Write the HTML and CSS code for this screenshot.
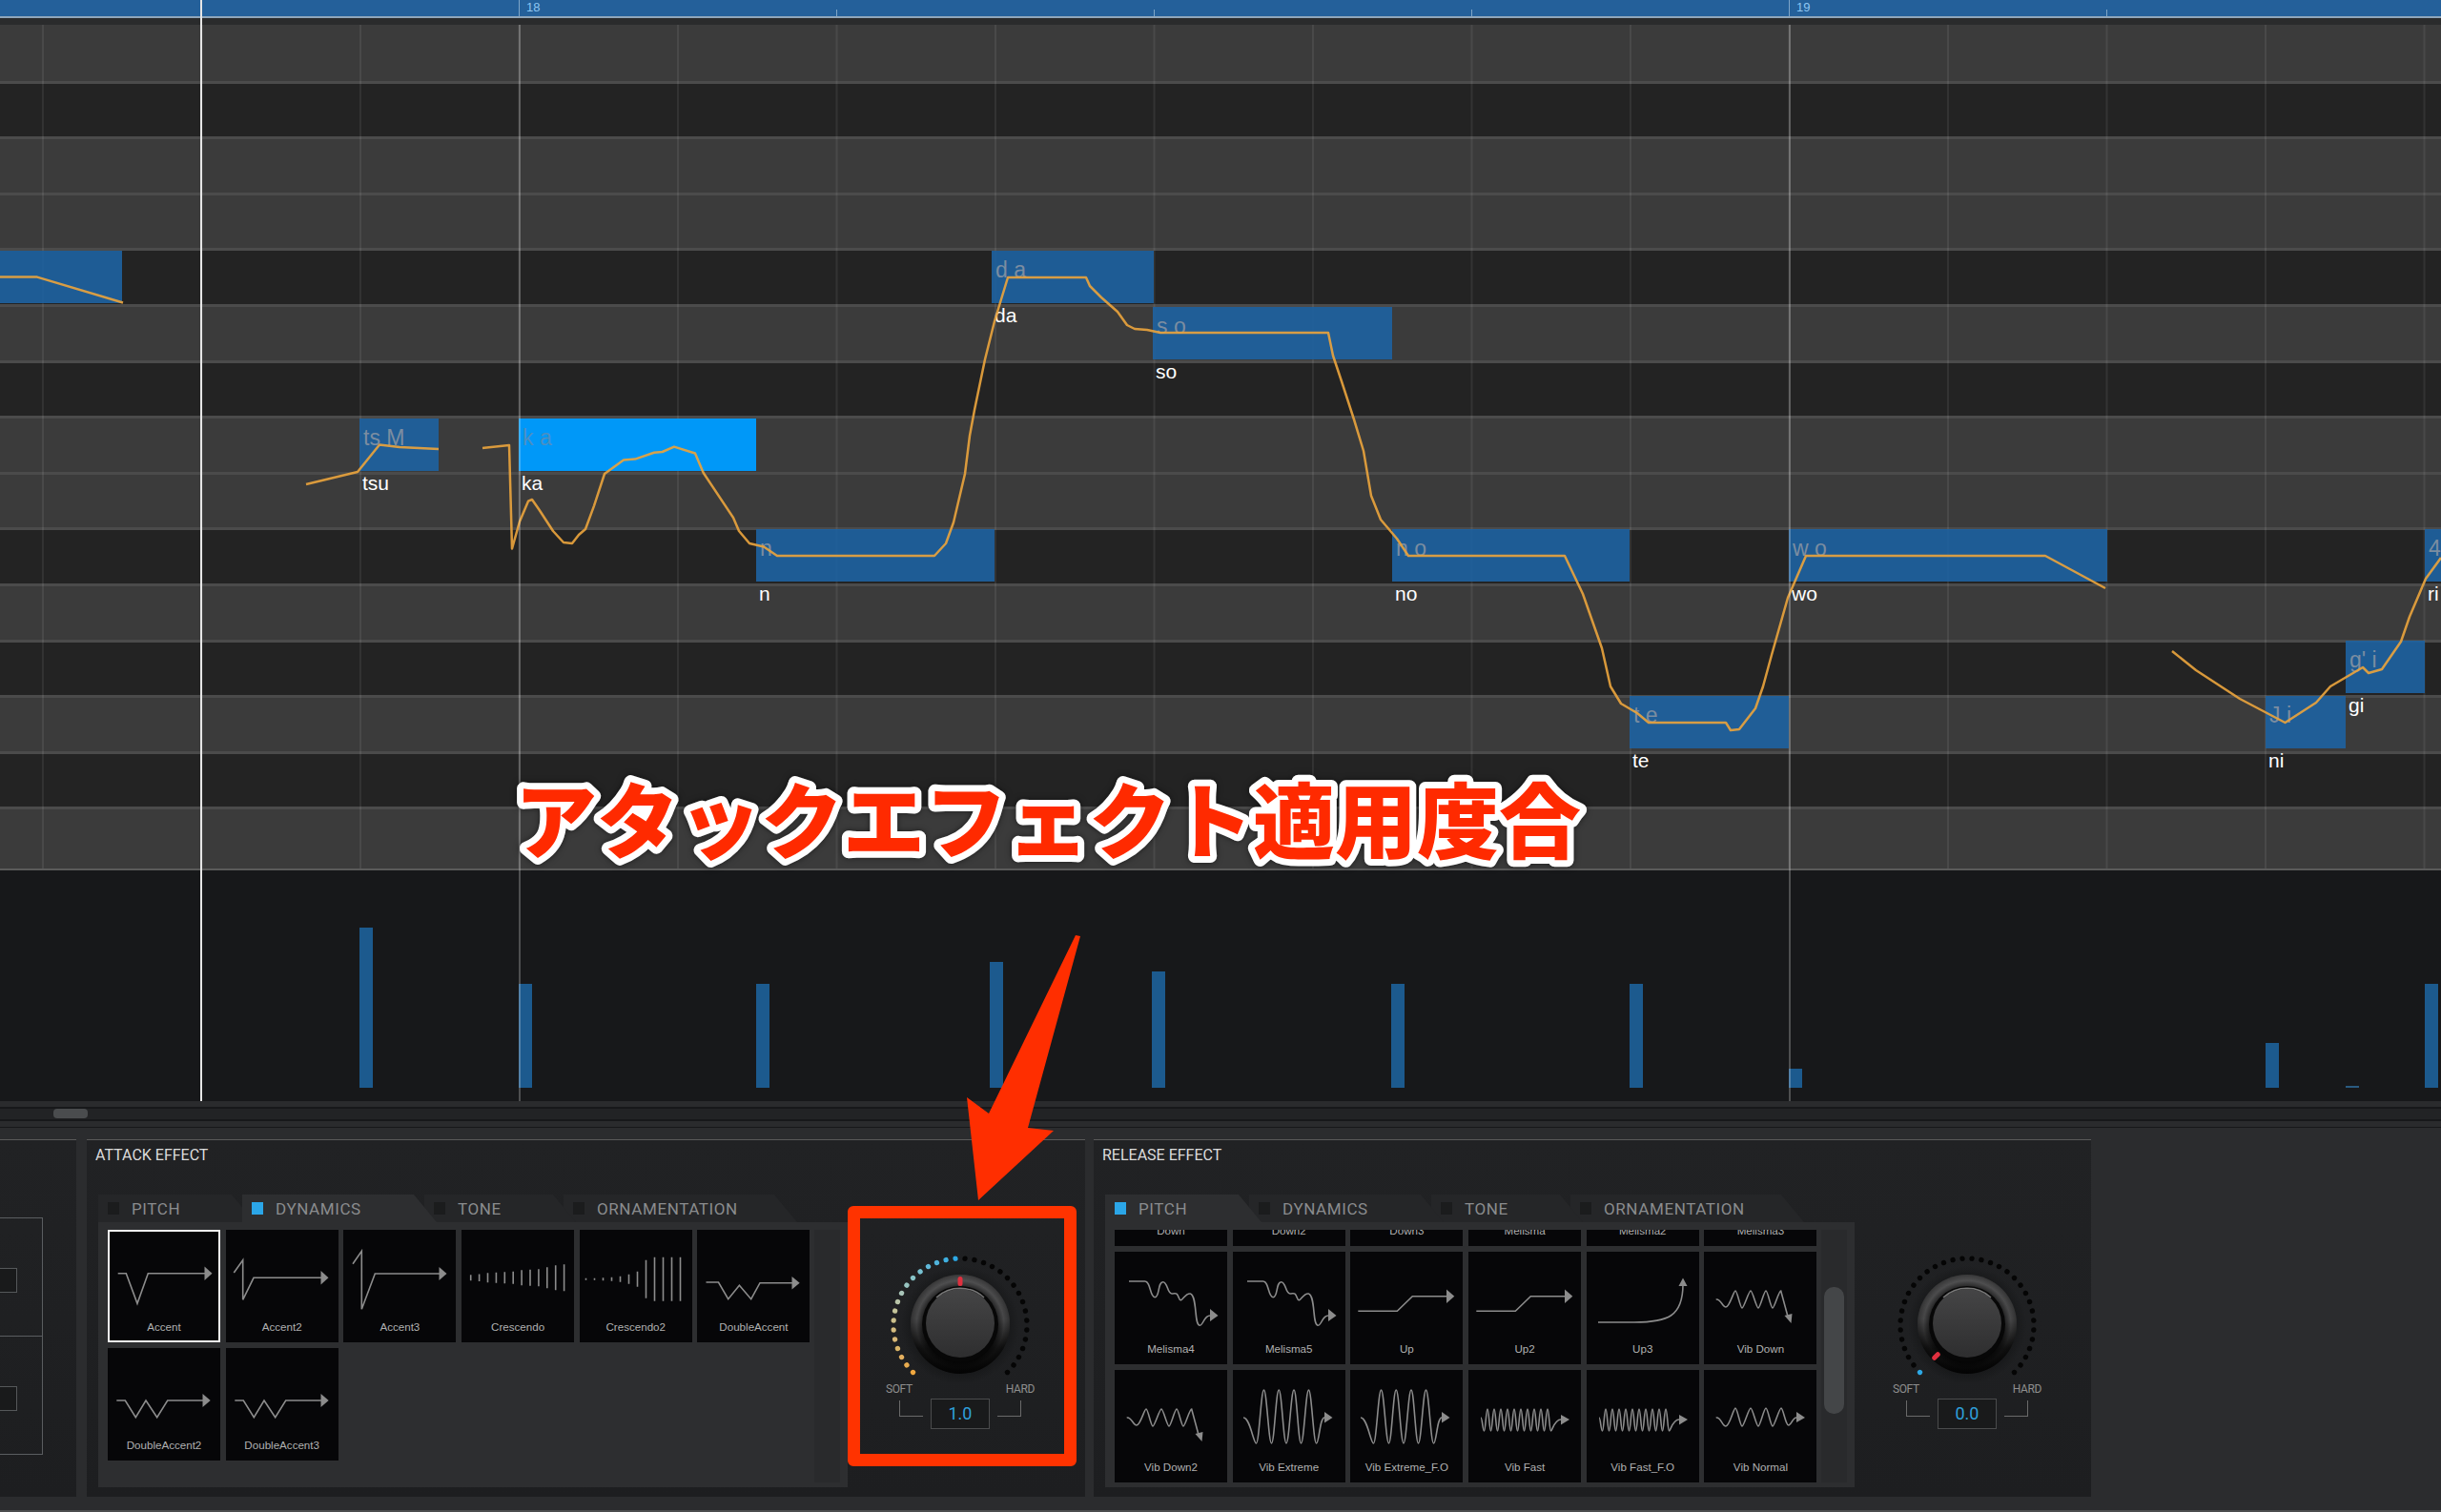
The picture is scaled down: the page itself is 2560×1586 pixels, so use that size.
FILE: index.html
```html
<!DOCTYPE html>
<html lang="ja">
    <head>
        <meta charset="UTF-8">
        <title>Attack Effect</title>
        <link rel="stylesheet" href="styles.css">
    </head>
    <body>
        <div class="timeline">
            <div class="ruler">
                <div class="tick"></div>
                <div class="tick tick-bar">18</div>
                <div class="tick"></div>
                <div class="tick"></div>
                <div class="tick"></div>
                <div class="tick tick-bar">19</div>
                <div class="tick"></div>
            </div>
            <div class="roll">
                <div class="row"></div>
                <div class="row dark"></div>
                <div class="row"></div>
                <div class="row"></div>
                <div class="row dark"></div>
                <div class="row"></div>
                <div class="row dark"></div>
                <div class="row"></div>
                <div class="row"></div>
                <div class="row dark"></div>
                <div class="row"></div>
                <div class="row dark"></div>
                <div class="row"></div>
                <div class="row dark"></div>
                <div class="row"></div>
            </div>
            <div class="velocity">
                <div class="vel" style="left:377px;height:168px"></div>
                <div class="vel" style="left:544px;height:109px"></div>
                <div class="vel" style="left:793px;height:109px"></div>
                <div class="vel" style="left:1038px;height:132px"></div>
                <div class="vel" style="left:1208px;height:122px"></div>
                <div class="vel" style="left:1459px;height:109px"></div>
                <div class="vel" style="left:1709px;height:109px"></div>
                <div class="vel" style="left:1876px;height:20px"></div>
                <div class="vel" style="left:2376px;height:47px"></div>
                <div class="vel vel-dim" style="left:2460px;height:2px"></div>
                <div class="vel" style="left:2543px;height:109px"></div>
            </div>

            <!-- notes sit on the roll at their pitch and time -->
            <div class="note" style="left:0;top:263px;width:128px"></div>
            <div class="note" style="left:377px;top:439px;width:83px">ts M<b>tsu</b></div>
            <div class="note note-on" style="left:544px;top:439px;width:249px">k a<b>ka</b></div>
            <div class="note" style="left:793px;top:555px;width:250px">n<b>n</b></div>
            <div class="note" style="left:1040px;top:263px;width:170px">d a<b>da</b></div>
            <div class="note" style="left:1209px;top:322px;width:251px">s o<b>so</b></div>
            <div class="note" style="left:1460px;top:555px;width:249px">n o<b>no</b></div>
            <div class="note" style="left:1709px;top:730px;width:167px">t e<b>te</b></div>
            <div class="note" style="left:1876px;top:555px;width:334px">w o<b>wo</b></div>
            <div class="note" style="left:2376px;top:730px;width:84px">J i<b>ni</b></div>
            <div class="note" style="left:2460px;top:672px;width:83px">g' i<b>gi</b></div>
            <div class="note" style="left:2543px;top:555px;width:17px">4<b>ri</b></div>

            <svg class="curve" width="2560" height="1155" viewBox="0 0 2560 1155">
                <polyline points="0,290.6 39,290.6 129,317.5"/>
                <polyline points="321,508 375,495 398,466.5 419,469 460,471"/>
                <polyline points="506,470 534,467 537,575.5 545,547 554,525.7 558,524 565.5,534.7 580,557 591,569 600,570 607,561 614,555 623,530.6 634,497 654,482.4 666,481.6 686,474.7 694.6,474 707,468.6 729,475.5 737.7,496 769,543 775,557 786,570 801,573.5 815,583 980,583 992,570 1000,548 1012,497 1017,457 1022,430 1033,377 1043,337 1057,291 1139,291 1143,300 1155,312 1172,327 1182,341 1190,345 1203,346 1217,349 1393,349 1398,373 1407,400 1420,440 1430,473 1438,520 1448,545 1465,565 1477,583 1641,583 1660,623 1680,680 1689,720 1700,738 1717,748 1729,758 1810,758 1815,766 1824,765 1841,743 1849,720 1858,687 1875,627 1894,583 2145,583 2208,617"/>
                <polyline points="2278,683 2303,703 2349,733 2396.5,758 2429,737 2444,720 2478,700 2484,706 2498,702 2518,673 2527,647 2544,607 2560,585"/>
            </svg>

            <div class="bar-line bar-18"></div>
            <div class="bar-line bar-19"></div>
            <div class="playhead"></div>
        </div>

        <div class="scroller"><div class="thumb"></div></div>

        <div class="panels">
            <div class="panel side">
                <div class="side-box">
                    <div class="side-cell"><div class="side-square"></div></div>
                    <div class="side-cell"><div class="side-square"></div></div>
                </div>
            </div>

            <div class="panel fx">
                <div class="panel-title">ATTACK EFFECT</div>
                <div class="fx-body">
                    <div class="fx-left">
                        <div class="tabs">
                            <div class="tab tab-pitch"><i></i>PITCH</div>
                            <div class="tab tab-dyn active"><i></i>DYNAMICS</div>
                            <div class="tab tab-tone"><i></i>TONE</div>
                            <div class="tab tab-orn"><i></i>ORNAMENTATION</div>
                        </div>
                        <div class="tile-box">
                            <div class="tile-view">
                                <div class="tile-grid">
                                    <div class="tile selected">
                                        <svg class="art" viewBox="0 0 118 90"><path d="M10.7 45.7H19.3L31 77.3 42.3 45.7H102"/><polygon points="101.5,38.5 109.5,45.7 101.5,53"/></svg>
                                        <span>Accent</span>
                                    </div>
                                    <div class="tile">
                                        <svg class="art" viewBox="0 0 118 90"><path d="M8.3 45L17.7 31.7V73.3L29 50.3H100"/><polygon points="99.5,43 107.5,50.3 99.5,57.5"/></svg>
                                        <span>Accent2</span>
                                    </div>
                                    <div class="tile">
                                        <svg class="art" viewBox="0 0 118 90"><path d="M10 35.7L19.3 22.3V83.3L33.3 46H101"/><polygon points="100.5,39 108.5,46 100.5,53"/></svg>
                                        <span>Accent3</span>
                                    </div>
                                    <div class="tile">
                                        <svg class="art" viewBox="0 0 118 90"><path d="M9.7 47.3v6M18.6 46.6v7.4M27.5 45.3v10M36.4 44.8v11M45.3 44.3v12M54.2 43.8v13M63.1 42.3v16M72 41.8v17M80.9 41.3v18M89.8 39.3v22M98.7 37.3v26M107.6 36.3v28"/></svg>
                                        <span>Crescendo</span>
                                    </div>
                                    <div class="tile">
                                        <svg class="art" viewBox="0 0 118 90"><path d="M6.5 50.7v2M15.5 50.7v2M24.5 50.2v3M33.5 49.7v4M42.5 48.7v6M51.5 46.7v10M60.5 43.7v16M69.5 31.7v40M78.5 28.7v46M87.5 28.7v46M96.5 28.7v46M105.5 28.7v46"/></svg>
                                        <span>Crescendo2</span>
                                    </div>
                                    <div class="tile">
                                        <svg class="art" viewBox="0 0 118 90"><path d="M9.5 55H22.5L32.7 72.7 44.4 58.3 56.7 72.7 66 55.7H100"/><polygon points="99.5,49 107.7,55.7 99.5,62.5"/></svg>
                                        <span>DoubleAccent</span>
                                    </div>
                                    <div class="tile">
                                        <svg class="art" viewBox="0 0 118 90"><path d="M9.3 55H18.3L29.3 72.7 40 55 51.7 72.7 62.7 55H100"/><polygon points="99.5,48 107.7,55 99.5,62"/></svg>
                                        <span>DoubleAccent2</span>
                                    </div>
                                    <div class="tile">
                                        <svg class="art" viewBox="0 0 118 90"><path d="M9.3 55H18.3L29.3 72.7 40 55 51.7 72.7 62.7 55H100"/><polygon points="99.5,48 107.7,55 99.5,62"/></svg>
                                        <span>DoubleAccent3</span>
                                    </div>
                                </div>
                            </div>
                            <div class="track"></div>
                        </div>
                    </div>
                    <div class="knob">
                        <svg class="dial" width="200" height="160" viewBox="-100 -100 200 160">
                            <defs>
                                <circle id="dot" cy="-70" r="2.7"/>
                                <g id="dial-dots">
                                    <use href="#dot" transform="rotate(-135)"/><use href="#dot" transform="rotate(-126.8)"/><use href="#dot" transform="rotate(-118.6)"/><use href="#dot" transform="rotate(-110.5)"/><use href="#dot" transform="rotate(-102.3)"/><use href="#dot" transform="rotate(-94.1)"/><use href="#dot" transform="rotate(-85.9)"/><use href="#dot" transform="rotate(-77.7)"/><use href="#dot" transform="rotate(-69.5)"/><use href="#dot" transform="rotate(-61.4)"/><use href="#dot" transform="rotate(-53.2)"/><use href="#dot" transform="rotate(-45)"/><use href="#dot" transform="rotate(-36.8)"/><use href="#dot" transform="rotate(-28.6)"/><use href="#dot" transform="rotate(-20.5)"/><use href="#dot" transform="rotate(-12.3)"/><use href="#dot" transform="rotate(-4.1)"/><use href="#dot" transform="rotate(4.1)"/><use href="#dot" transform="rotate(12.3)"/><use href="#dot" transform="rotate(20.5)"/><use href="#dot" transform="rotate(28.6)"/><use href="#dot" transform="rotate(36.8)"/><use href="#dot" transform="rotate(45)"/><use href="#dot" transform="rotate(53.2)"/><use href="#dot" transform="rotate(61.4)"/><use href="#dot" transform="rotate(69.5)"/><use href="#dot" transform="rotate(77.7)"/><use href="#dot" transform="rotate(85.9)"/><use href="#dot" transform="rotate(94.1)"/><use href="#dot" transform="rotate(102.3)"/><use href="#dot" transform="rotate(110.5)"/><use href="#dot" transform="rotate(118.6)"/><use href="#dot" transform="rotate(126.8)"/><use href="#dot" transform="rotate(135)"/>
                                </g>
                                <radialGradient id="halo">
                                    <stop offset="70%" stop-color="#141516"/>
                                    <stop offset="100%" stop-color="#141516" stop-opacity="0"/>
                                </radialGradient>
                                <linearGradient id="ring" x1="0" y1="0" x2="0" y2="1">
                                    <stop offset="0%" stop-color="#505051"/>
                                    <stop offset="45%" stop-color="#464647"/>
                                    <stop offset="74%" stop-color="#121212"/>
                                    <stop offset="100%" stop-color="#040404"/>
                                </linearGradient>
                                <radialGradient id="ring-shade">
                                    <stop offset="76%" stop-color="#000" stop-opacity=".5"/>
                                    <stop offset="88%" stop-color="#000" stop-opacity="0"/>
                                    <stop offset="100%" stop-color="#000" stop-opacity=".3"/>
                                </radialGradient>
                                <linearGradient id="cap" x1="0" y1="0" x2="0" y2="1">
                                    <stop offset="0%" stop-color="#454546"/>
                                    <stop offset="100%" stop-color="#2e2e2f"/>
                                </linearGradient>
                            </defs>
                            <circle r="62" fill="url(#halo)"/>
                            <circle cy="-1" r="52" fill="url(#ring)"/>
                            <circle cy="-1" r="52" fill="url(#ring-shade)"/>
                            <circle cy="-1" r="40" fill="#070707"/>
                            <circle cy="-2" r="36" fill="url(#cap)"/>
                            <path class="cap-shine" d="M-25 -29A37 37 0 0 1 25 -29"/>
                            <use href="#dial-dots" fill="#050505"/>
                            <use href="#dot" transform="rotate(-135)" fill="#f0a840"/>
                            <use href="#dot" transform="rotate(-126.8)" fill="#e8ac50"/>
                            <use href="#dot" transform="rotate(-118.6)" fill="#e4b060"/>
                            <use href="#dot" transform="rotate(-110.5)" fill="#d8b468"/>
                            <use href="#dot" transform="rotate(-102.3)" fill="#d8b878"/>
                            <use href="#dot" transform="rotate(-94.1)" fill="#d4bc80"/>
                            <use href="#dot" transform="rotate(-85.9)" fill="#ccc08c"/>
                            <use href="#dot" transform="rotate(-77.7)" fill="#c4c49a"/>
                            <use href="#dot" transform="rotate(-69.5)" fill="#b8c4a8"/>
                            <use href="#dot" transform="rotate(-61.4)" fill="#a8c4b8"/>
                            <use href="#dot" transform="rotate(-53.2)" fill="#98c4c0"/>
                            <use href="#dot" transform="rotate(-45)" fill="#88c4c8"/>
                            <use href="#dot" transform="rotate(-36.8)" fill="#78c0d0"/>
                            <use href="#dot" transform="rotate(-28.6)" fill="#60b8d8"/>
                            <use href="#dot" transform="rotate(-20.5)" fill="#50b4dc"/>
                            <use href="#dot" transform="rotate(-12.3)" fill="#40b0e0"/>
                            <use href="#dot" transform="rotate(-4.1)" fill="#2ea8e4"/>
                            <rect class="pointer" x="-2.5" y="-51" width="5" height="10" rx="2.5"/>
                        </svg>
                        <div class="knob-labels"><span>SOFT</span><span>HARD</span></div>
                        <div class="knob-value">
                            <div class="bracket"></div>
                            <div class="value-box">1.0</div>
                            <div class="bracket bracket-r"></div>
                        </div>
                    </div>
                </div>
            </div>

            <div class="panel fx fx-release">
                <div class="panel-title">RELEASE EFFECT</div>
                <div class="fx-body">
                    <div class="fx-left">
                        <div class="tabs">
                            <div class="tab tab-pitch active"><i></i>PITCH</div>
                            <div class="tab tab-dyn"><i></i>DYNAMICS</div>
                            <div class="tab tab-tone"><i></i>TONE</div>
                            <div class="tab tab-orn"><i></i>ORNAMENTATION</div>
                        </div>
                        <div class="tile-box">
                            <div class="tile-view">
                                <div class="tile-grid scrolled">
                                    <div class="tile"><div class="art"></div><span>Down</span></div>
                                    <div class="tile"><div class="art"></div><span>Down2</span></div>
                                    <div class="tile"><div class="art"></div><span>Down3</span></div>
                                    <div class="tile"><div class="art"></div><span>Melisma</span></div>
                                    <div class="tile"><div class="art"></div><span>Melisma2</span></div>
                                    <div class="tile"><div class="art"></div><span>Melisma3</span></div>
                                    <div class="tile">
                                        <svg class="art" viewBox="0 0 118 90"><path d="M15 31H31.7C38 31 36.7 47.7 42.3 47.7C47.3 47.7 45 31.7 50.7 31.7C55.7 31.7 55 44 60 44C64 44 65 42 67.3 48.3C70 56 73.3 42.7 79.3 44C86.7 46 83.3 76.7 89 77.3C93.3 77.3 93.3 67 100 67"/><polygon points="100,60 108.5,67 100,73"/></svg>
                                        <span>Melisma4</span>
                                    </div>
                                    <div class="tile">
                                        <svg class="art" viewBox="0 0 118 90"><path d="M15 31H31.7C38 31 36.7 47.7 42.3 47.7C47.3 47.7 45 31.7 50.7 31.7C55.7 31.7 55 44 60 44C64 44 65 42 67.3 48.3C70 56 73.3 42.7 79.3 44C86.7 46 83.3 76.7 89 77.3C93.3 77.3 93.3 67 100 67"/><polygon points="100,60 108.5,67 100,73"/></svg>
                                        <span>Melisma5</span>
                                    </div>
                                    <div class="tile">
                                        <svg class="art" viewBox="0 0 118 90"><path d="M8.3 62.3H49.3L65.3 46.7H102"/><polygon points="101,39.5 109.3,46.7 101,54"/></svg>
                                        <span>Up</span>
                                    </div>
                                    <div class="tile">
                                        <svg class="art" viewBox="0 0 118 90"><path d="M8.3 62.3H49.3L65.3 46.7H102"/><polygon points="101,39.5 109.3,46.7 101,54"/></svg>
                                        <span>Up2</span>
                                    </div>
                                    <div class="tile">
                                        <svg class="art" viewBox="0 0 118 90"><path d="M12 74H50C85 74 101 68 101 34"/><polygon points="96.5,36 101,27.5 105.5,36"/></svg>
                                        <span>Up3</span>
                                    </div>
                                    <div class="tile">
                                        <svg class="art" viewBox="0 0 118 90"><path d="M12.7 50C18 49 19 58 23 58S31 41 33 41S38 59 40 59S47 41 49 41S55 59 57 59S63 41 65 41S70 59 72 59S78.5 41 80.7 41L88 68"/><polygon points="84.5,67 92.5,65 91.5,75"/></svg>
                                        <span>Vib Down</span>
                                    </div>
                                    <div class="tile">
                                        <svg class="art" viewBox="0 0 118 90"><path d="M12.7 50C18 49 19 58 23 58S31 41 33 41S38 59 40 59S47 41 49 41S55 59 57 59S63 41 65 41S70 59 72 59S78.5 41 80.7 41L88 68"/><polygon points="84.5,67 92.5,65 91.5,75"/></svg>
                                        <span>Vib Down2</span>
                                    </div>
                                    <div class="tile">
                                        <svg class="art" viewBox="0 0 118 90"><path d="M11 50C18 50 21.5 77 24.5 77C27.5 77 29.5 21 32.5 21C35.5 21 37.5 77 40.5 77C43.5 77 45.2 21 48.2 21C51.2 21 53 77 56 77C59 77 61 21 64 21C67 21 68.5 77 71.5 77C74.5 77 76.5 21 79.5 21C82.5 21 84.5 77 87.5 77C90.5 77 91 50 96 50"/><polygon points="96,44 104.5,50 96,55.5"/></svg>
                                        <span>Vib Extreme</span>
                                    </div>
                                    <div class="tile">
                                        <svg class="art" viewBox="0 0 118 90"><path d="M11 50C18 50 21.5 77 24.5 77C27.5 77 29.5 21 32.5 21C35.5 21 37.5 77 40.5 77C43.5 77 45.2 21 48.2 21C51.2 21 53 77 56 77C59 77 61 21 64 21C67 21 68.5 77 71.5 77C74.5 77 76.5 21 79.5 21C82.5 21 84.5 77 87.5 77C90.5 77 91 50 96 50"/><polygon points="96,44 104.5,50 96,55.5"/></svg>
                                        <span>Vib Extreme_F.O</span>
                                    </div>
                                    <div class="tile">
                                        <svg class="art" viewBox="0 0 118 90"><path d="M13 50C14.5 50 15 64 16.5 64S18.5 41 20 41S22 64 23.5 64S25.5 41 27 41S29 64 30.5 64S32.5 41 34 41S36 64 37.5 64S39.5 41 41 41S43 64 44.5 64S46.5 41 48 41S50 64 51.5 64S53.5 41 55 41S57 64 58.5 64S60.5 41 62 41S64 64 65.5 64S67.5 41 69 41S71 64 72.5 64S74.5 41 76 41S78 64 79.5 64S81.5 41 83 41S85 64 86.5 64S90 52 97 52"/><polygon points="97,47 106,52 97,57.5"/></svg>
                                        <span>Vib Fast</span>
                                    </div>
                                    <div class="tile">
                                        <svg class="art" viewBox="0 0 118 90"><path d="M13 50C14.5 50 15 64 16.5 64S18.5 41 20 41S22 64 23.5 64S25.5 41 27 41S29 64 30.5 64S32.5 41 34 41S36 64 37.5 64S39.5 41 41 41S43 64 44.5 64S46.5 41 48 41S50 64 51.5 64S53.5 41 55 41S57 64 58.5 64S60.5 41 62 41S64 64 65.5 64S67.5 41 69 41S71 64 72.5 64S74.5 41 76 41S78 64 79.5 64S81.5 41 83 41S85 64 86.5 64S90 52 97 52"/><polygon points="97,47 106,52 97,57.5"/></svg>
                                        <span>Vib Fast_F.O</span>
                                    </div>
                                    <div class="tile">
                                        <svg class="art" viewBox="0 0 118 90"><path d="M12.7 50C18 49 19 59 23 59S31 40 33 40S38 59 40 59S47 40 49 40S55 59 57 59S63 40 65 40S70 59 72 59S79 40 81 40S86 59 89 58S93 50 97 50"/><polygon points="97,44 106,50 97,55"/></svg>
                                        <span>Vib Normal</span>
                                    </div>
                                </div>
                            </div>
                            <div class="track"><div class="track-thumb"></div></div>
                        </div>
                    </div>
                    <div class="knob">
                        <svg class="dial" width="200" height="160" viewBox="-100 -100 200 160">
                            <circle r="62" fill="url(#halo)"/>
                            <circle cy="-1" r="52" fill="url(#ring)"/>
                            <circle cy="-1" r="52" fill="url(#ring-shade)"/>
                            <circle cy="-1" r="40" fill="#070707"/>
                            <circle cy="-2" r="36" fill="url(#cap)"/>
                            <path class="cap-shine" d="M-25 -29A37 37 0 0 1 25 -29"/>
                            <use href="#dial-dots" fill="#050505"/>
                            <use href="#dot" transform="rotate(-135)" fill="#2ea8e4"/>
                            <rect class="pointer" x="-2.5" y="-51" width="5" height="10" rx="2.5" transform="rotate(-135)"/>
                        </svg>
                        <div class="knob-labels"><span>SOFT</span><span>HARD</span></div>
                        <div class="knob-value">
                            <div class="bracket"></div>
                            <div class="value-box">0.0</div>
                            <div class="bracket bracket-r"></div>
                        </div>
                    </div>
                </div>
            </div>
        </div>
        <div class="footer-line"></div>

        <!-- annotation drawn over the screen -->
        <svg class="caption" width="1200" height="140" viewBox="0 0 1200 140">
            <text x="40" y="104">アタックエフェクト適用度合</text>
        </svg>
        <div class="frame"></div>
        <svg class="arrow" width="140" height="300" viewBox="0 0 140 300">
            <polygon points="128,11 133,12 78,213 105,216 26,289 14,181 37,198"/>
        </svg>
    </body>
</html>
```

FILE: styles.css
```css
html, body {
    margin: 0;
    padding: 0;
}
body {
    position: relative;
    width: 2560px;
    height: 1586px;
    overflow: hidden;
    background-color: #2b2c2e;
    font-family: "Liberation Sans", Arial, sans-serif;
}

/* timeline */
.timeline {
    position: relative;
    height: 1155px;
}
.ruler {
    display: flex;
    box-sizing: border-box;
    height: 26px;
    padding-left: 211px;
    background: linear-gradient(#24609a 0, #24609a 17px, #8fa6bb 17px, #8fa6bb 19px, #2a2b2c 19px);
}
.tick {
    position: relative;
    flex: 0 0 333px;
    padding-left: 8px;
    box-sizing: border-box;
    font-size: 13px;
    line-height: 15px;
    color: #8ec6f2;
}
.tick::before {
    content: "";
    position: absolute;
    left: 0;
    top: 10px;
    width: 1px;
    height: 7px;
    background-color: #7fa6c8;
}
.tick-bar::before {
    top: 0;
    height: 17px;
}
.roll {
    position: relative;
    height: 885px;
    background-color: #3b3b3b;
}
.roll::after {
    content: "";
    position: absolute;
    inset: 0;
    background-image: linear-gradient(90deg, rgba(255, 255, 255, .07) 2px, transparent 2px);
    background-size: 166.5px 100%;
    background-position: 44px 0;
}
.row {
    box-sizing: border-box;
    height: 58.6px;
    border-top: 3px solid #4b4b4b;
    background-color: #3b3b3b;
}
.row:first-child {
    border-top-color: #3b3b3b;
}
.row.dark {
    background-color: #232323;
}
.velocity {
    position: relative;
    height: 244px;
    box-sizing: border-box;
    border-top: 2px solid #5a5a5a;
    background-color: #17181a;
}
.vel {
    position: absolute;
    bottom: 14px;
    width: 14px;
    background-color: #1c5a8e;
}
.vel-dim {
    background-color: #2a5a80;
}
.note {
    position: absolute;
    height: 55px;
    padding-left: 4px;
    box-sizing: border-box;
    background-color: rgba(30, 98, 160, .92);
    font-size: 23px;
    line-height: 40px;
    white-space: nowrap;
    color: #7b8da1;
}
.note b {
    position: absolute;
    top: 100%;
    left: 3px;
    font-weight: normal;
    font-size: 21px;
    line-height: 26px;
    color: #fff;
}
.note-on {
    background-color: #0098f8;
    color: #4a8fc2;
}
.curve {
    position: absolute;
    left: 0;
    top: 0;
}
.curve polyline {
    fill: none;
    stroke: #e8a33d;
    stroke-width: 2.5;
    stroke-linejoin: round;
    opacity: .92;
}
.bar-line {
    position: absolute;
    top: 26px;
    bottom: 0;
    width: 2px;
    background-color: rgba(255, 255, 255, .24);
}
.bar-18 {
    left: 544px;
}
.bar-19 {
    left: 1876px;
}
.playhead {
    position: absolute;
    left: 210px;
    top: 0;
    bottom: 0;
    width: 2px;
    background-color: #e6e6e6;
}

/* horizontal scroller under the timeline */
.scroller {
    position: relative;
    box-sizing: border-box;
    height: 27px;
    border-top: 6px solid #2a2b2d;
    border-bottom: 6px solid #2a2b2d;
    background-color: #222325;
    box-shadow: inset 0 2px 0 #17181a, inset 0 -2px 0 #17181a, 0 1px 0 #17181a;
}
.thumb {
    position: absolute;
    left: 56px;
    top: 2px;
    width: 36px;
    height: 10px;
    border-radius: 4px;
    background-color: #4a4c4e;
}

/* bottom panels */
.panels {
    display: flex;
    height: 388px;
    padding-top: 13px;
    box-sizing: border-box;
}
.panel {
    box-sizing: border-box;
    border-top: 1px solid #5a5a5a;
    background: linear-gradient(#212224, #1d1e20);
}
.side {
    position: relative;
    flex: 0 0 80px;
    margin-right: 11px;
}
.side-box {
    display: flex;
    flex-direction: column;
    box-sizing: border-box;
    width: 45px;
    height: 249px;
    margin-top: 81px;
    border: 1px solid #5a5d60;
    border-left: none;
}
.side-cell {
    flex: 1;
    display: flex;
    align-items: center;
}
.side-cell + .side-cell {
    border-top: 1px solid #5a5d60;
}
.side-square {
    box-sizing: border-box;
    width: 18px;
    height: 26px;
    margin-top: 6px;
    border: 1px solid #55585a;
    border-left: none;
    background-color: #191a1b;
}
.fx {
    flex: 0 0 1047px;
    margin-right: 9px;
}
.fx-release {
    flex-basis: 1046px;
    margin-right: 0;
}
.panel-title {
    height: 57px;
    padding-left: 9px;
    font-family: Roboto, sans-serif;
    font-size: 16px;
    line-height: 32px;
    color: #dcdcdc;
}
.fx-body {
    display: flex;
    padding-left: 12px;
}
.fx-left {
    flex: 0 0 786px;
}
.tabs {
    display: flex;
    height: 29px;
}
.tab {
    position: relative;
    display: flex;
    align-items: center;
    gap: 13px;
    box-sizing: border-box;
    height: 29px;
    padding-left: 10px;
    background-color: #252628;
    clip-path: polygon(0 0, calc(100% - 24px) 0, 100% 100%, 0 100%);
    font-family: Roboto, sans-serif;
    font-size: 17px;
    letter-spacing: .6px;
    color: #8a8c8e;
}
.tab i {
    width: 12px;
    height: 13px;
    background-color: #1b1c1d;
}
.tab-pitch {
    flex: 0 0 164px;
    margin-right: -13px;
    z-index: 4;
}
.tab-dyn {
    flex: 0 0 204px;
    margin-right: -13px;
    z-index: 3;
}
.tab-tone {
    flex: 0 0 159px;
    margin-right: -13px;
    z-index: 2;
}
.tab-orn {
    flex: 0 0 245px;
    z-index: 1;
}
.tab.active {
    z-index: 5;
    background-color: #2d2e30;
}
.tab.active i {
    background-color: #2ba6e8;
}
.tile-box {
    display: flex;
    box-sizing: border-box;
    height: 278px;
    padding: 8px 8px 5px 10px;
    background-color: #2d2e30;
}
.tile-view {
    flex: 0 0 741px;
    overflow: hidden;
}
.tile-grid {
    display: grid;
    grid-template-columns: repeat(6, 118px);
    grid-auto-rows: 118px;
    gap: 5.7px;
}
.tile-grid.scrolled {
    margin-top: -100.7px;
}
.tile {
    box-sizing: border-box;
    background-color: #060608;
    text-align: center;
    font-size: 11.6px;
    line-height: 23px;
    color: #b0b0b0;
}
.tile.selected {
    outline: 2px solid #f0f0f0;
    outline-offset: -2px;
}
.art {
    display: block;
    width: 118px;
    height: 90px;
}
.art path {
    fill: none;
    stroke: #8c8c8c;
    stroke-width: 1.6;
}
.art polygon {
    fill: #8c8c8c;
}
.track {
    flex: 1;
    position: relative;
    background-color: #292a2c;
}
.track-thumb {
    position: absolute;
    left: 3px;
    right: 3px;
    top: 60px;
    height: 133px;
    border-radius: 10px;
    background-color: #444648;
}
.footer-line {
    position: absolute;
    left: 0;
    right: 0;
    bottom: 0;
    height: 2px;
    background-color: #4c4d4f;
}

/* knob */
.knob {
    flex: 0 0 236px;
    display: flex;
    flex-direction: column;
    align-items: center;
    padding-top: 37px;
}
.dial {
    display: block;
}
.cap-shine {
    fill: none;
    stroke: #a8a8a8;
    stroke-width: 1.4;
    opacity: .7;
}
.pointer {
    fill: #e0303f;
}
.knob-labels {
    display: flex;
    justify-content: space-between;
    width: 156px;
    font-family: Roboto, sans-serif;
    font-size: 12px;
    letter-spacing: -.4px;
    line-height: 14px;
    color: #8e8e8e;
}
.knob-value {
    display: flex;
    gap: 8px;
    margin-top: 3px;
}
.bracket {
    box-sizing: border-box;
    width: 25px;
    height: 17px;
    margin-top: 2px;
    border-left: 1px solid #6a6a6a;
    border-bottom: 1px solid #6a6a6a;
}
.bracket-r {
    border-left: none;
    border-right: 1px solid #6a6a6a;
}
.value-box {
    box-sizing: border-box;
    width: 62px;
    height: 32px;
    border: 1px solid #4a4b4c;
    background-color: #191a1b;
    text-align: center;
    font-family: Roboto, sans-serif;
    font-size: 18px;
    line-height: 30px;
    color: #2fa0dc;
}

/* red annotation on top */
.caption {
    position: absolute;
    left: 500px;
    top: 790px;
    filter: drop-shadow(0 0 3px rgba(0, 0, 0, .5));
}
.caption text {
    font-family: "Noto Sans CJK JP", sans-serif;
    font-weight: 900;
    font-size: 86px;
    fill: #ff2a00;
    stroke: #fff;
    stroke-width: 14px;
    stroke-linejoin: round;
    paint-order: stroke fill;
}
.frame {
    position: absolute;
    left: 889px;
    top: 1265px;
    width: 240px;
    height: 273px;
    box-sizing: border-box;
    border: 13px solid #ff3300;
    border-radius: 6px;
}
.arrow {
    position: absolute;
    left: 1000px;
    top: 970px;
}
.arrow polygon {
    fill: #ff2e00;
}
```
